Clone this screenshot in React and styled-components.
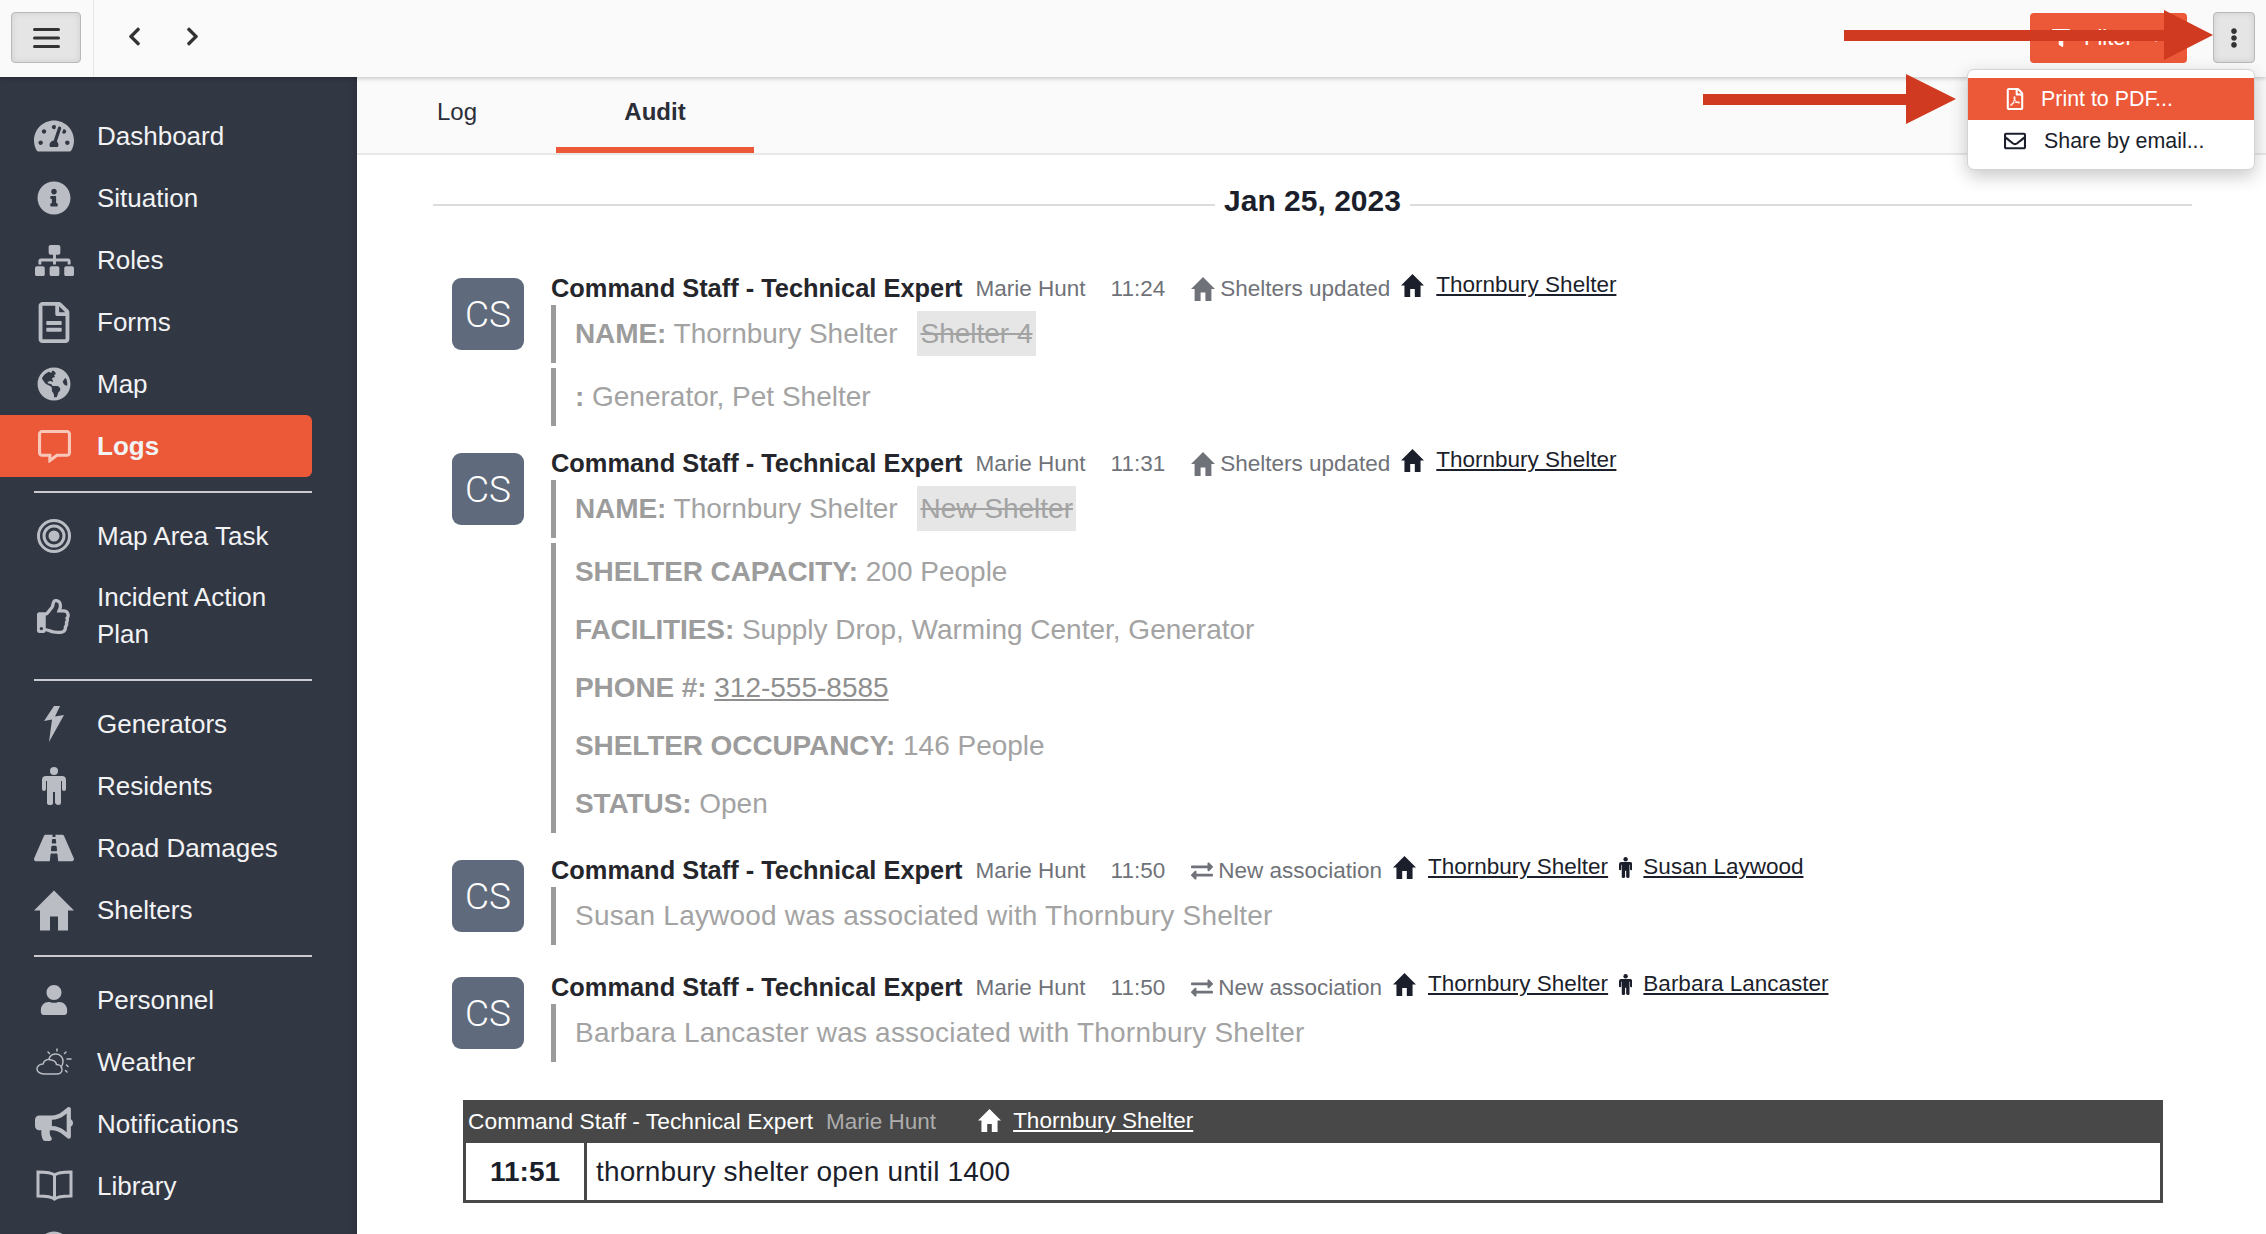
import React from 'react'
import styled, { createGlobalStyle } from 'styled-components'
import {
  FaTachometerAlt, FaInfoCircle, FaSitemap, FaRegFileAlt, FaGlobeAmericas, FaRegCommentAlt,
  FaRegThumbsUp, FaRoad, FaUser, FaBullhorn, FaQuestionCircle,
  FaExchangeAlt, FaRegFilePdf, FaRegEnvelope, FaFilter, FaCaretDown, FaChevronLeft, FaChevronRight,
  FaEllipsisV,
} from 'react-icons/fa'

const ORANGE = '#ec5939'
const ARROW = '#cf3a20'

const GlobalStyle = createGlobalStyle`
  html, body { margin: 0; padding: 0; height: 100%; overflow: hidden; background: #fff; }
  body { font-family: "Liberation Sans", Arial, sans-serif; color: #1b1e2b; }
`

const Page = styled.div`
  position: relative;
  width: 2266px;
  height: 1234px;
  overflow: hidden;
  display: flex;
  flex-direction: column;
`

const TopBar = styled.header`
  position: relative;
  z-index: 3;
  flex: none;
  height: 77px;
  box-sizing: border-box;
  padding-bottom: 2px;
  display: flex;
  align-items: center;
  background: #fafafa;
  box-shadow: 0 1px 5px rgba(0, 0, 0, 0.25);
`
const BurgerCell = styled.div`
  width: 94px;
  height: 77px;
  margin-bottom: -2px;
  box-sizing: border-box;
  padding: 0 0 2px 11px;
  display: flex;
  align-items: center;
  border-right: 1px solid #e8e8e8;
`
const GreyButton = styled.button`
  width: ${p => p.$w}px;
  height: 51px;
  padding: 0;
  display: flex;
  align-items: center;
  justify-content: center;
  background: #e5e5e5;
  border: 1px solid #b9b9b9;
  border-radius: 4px;
  color: #333;
  box-shadow: inset 0 0 6px rgba(0, 0, 0, 0.1);
`
const HistoryNav = styled.div`
  display: flex;
  gap: 37px;
  padding: 0 0 2px 30px;
  color: #333;
  font-size: 21px;
  line-height: 0;
`
const TopRight = styled.div`
  margin-left: auto;
  display: flex;
  align-items: center;
  gap: 26px;
  padding-right: 11px;
`
const FilterButton = styled.button`
  width: 157px;
  height: 50px;
  display: flex;
  align-items: center;
  justify-content: center;
  gap: 14px;
  border: 0;
  border-radius: 4px;
  background: ${ORANGE};
  color: #fff;
  font: 22px "Liberation Sans", Arial, sans-serif;
`

const Body = styled.div`
  flex: 1;
  min-height: 0;
  display: flex;
`

const Sidebar = styled.aside`
  flex: none;
  width: 357px;
  box-sizing: border-box;
  padding: 28px 0 0;
  overflow: hidden;
  background: #323744;
  box-shadow: inset -7px 0 6px -4px rgba(0, 0, 0, 0.12);
`
const NavRow = styled.div`
  width: 312px;
  min-height: ${p => (p.$tall ? 98 : 62)}px;
  box-sizing: border-box;
  display: flex;
  align-items: center;
  border-radius: 0 6px 6px 0;
  background: ${p => (p.$active ? ORANGE : 'transparent')};
  color: #f2f3f4;
  font-size: 26px;
  line-height: 37px;
  font-weight: ${p => (p.$active ? 700 : 400)};
`
const NavIcon = styled.span`
  flex: none;
  width: 97px;
  box-sizing: border-box;
  padding-left: 34px;
  display: flex;
  color: ${p => (p.$active ? '#f9c7ba' : '#babdc3')};
  font-size: 36px;
  line-height: 0;
`
const NavIconBox = styled.span`
  width: 40px;
  display: flex;
  justify-content: center;
`
const NavDivider = styled.hr`
  width: 278px;
  height: 2px;
  margin: 14px 0 12px 34px;
  border: 0;
  background: #c9cbd0;
`

const Content = styled.main`
  flex: 1;
  min-width: 0;
`
const Tabs = styled.nav`
  height: 78px;
  box-sizing: border-box;
  display: flex;
  background: #fafafa;
  border-bottom: 2px solid #e8e8e8;
`
const Tab = styled.div`
  width: 198px;
  height: 76px;
  margin-left: ${p => p.$left}px;
  box-sizing: border-box;
  display: flex;
  align-items: center;
  justify-content: center;
  font-size: 24px;
  font-weight: ${p => (p.$active ? 700 : 400)};
  color: #2b2e38;
  border-bottom: 6px solid ${p => (p.$active ? ORANGE : 'transparent')};
`
const Feed = styled.div`
  padding: 28px 74px 0 76px;
`
const DateRow = styled.div`
  display: flex;
  align-items: center;
  gap: 9px;
  height: 36px;
  margin-bottom: 53px;
  font-size: 30px;
  font-weight: 700;
  &::before, &::after {
    content: '';
    flex: 1;
    height: 2px;
    margin-top: 8px;
    background: #dcdcdc;
  }
`
const Entry = styled.article`
  display: flex;
  padding-left: 19px;
  margin-bottom: ${p => p.$after}px;
`
const Avatar = styled.div`
  flex: none;
  width: 72px;
  height: 72px;
  margin: 6px 27px 0 0;
  display: flex;
  align-items: center;
  justify-content: center;
  border-radius: 9px;
  background: #5f6b7c;
  color: #fff;
  font-family: Roboto, "Liberation Sans", sans-serif;
  font-weight: 300;
  font-size: 37px;
`
const EntryMain = styled.div`
  flex: 1;
  min-width: 0;
`
const EntryHead = styled.div`
  height: 33px;
  display: flex;
  align-items: center;
  white-space: nowrap;
`
const Role = styled.strong`
  font-size: 25.4px;
  color: #25262b;
`
const Author = styled.span`
  margin-left: 13px;
  font-size: 22.5px;
  color: #6f7278;
`
const Time = styled(Author)`
  margin-left: 25px;
`
const Action = styled.span`
  margin-left: 26px;
  display: flex;
  align-items: center;
  gap: 5px;
  font-size: 22.5px;
  color: #6f7278;
`
const Subject = styled.span`
  display: flex;
  align-items: center;
  margin-left: ${p => p.$left}px;
  margin-bottom: ${p => p.$lift}px;
  font-size: 22.5px;
  color: ${p => p.$color || '#1b1e2b'};
`
const SubjectLink = styled.a`
  margin-left: ${p => p.$gap}px;
  color: inherit;
  text-decoration: underline;
`
const Change = styled.div`
  min-height: 58px;
  box-sizing: border-box;
  margin-bottom: 5px;
  padding-left: 19px;
  border-left: 5px solid #9b9b9b;
`
const ChangeLine = styled.div`
  height: 58px;
  line-height: 58px;
  font-size: 28px;
  color: #a3a3a3;
  white-space: nowrap;
`
const Message = styled(ChangeLine)`
  letter-spacing: 0.2px;
`
const Field = styled.b`
  color: #9c9c9c;
  letter-spacing: -0.1px;
`
const Previous = styled.s`
  margin-left: 12px;
  padding: 7px 3px;
  background: #e6e6e6;
`
const Phone = styled.a`
  color: #8f8f8f;
  text-decoration: underline;
`
const Note = styled.section`
  margin: 33px 29px 0 30px;
  border: 3px solid #484848;
  border-top: 0;
`
const NoteHead = styled.div`
  height: 43px;
  margin: 0 -3px;
  padding-left: 5px;
  display: flex;
  align-items: center;
  background: #484848;
  color: #fff;
  font-size: 22.8px;
`
const NoteAuthor = styled.span`
  margin-left: 13px;
  font-size: 22.5px;
  color: #adadad;
`
const NoteBody = styled.div`
  height: 57px;
  display: flex;
  align-items: center;
`
const NoteTime = styled.div`
  width: 118px;
  height: 100%;
  display: flex;
  align-items: center;
  justify-content: center;
  border-right: 3px solid #484848;
  font-size: 28px;
  font-weight: 700;
`
const NoteText = styled.div`
  padding-left: 9px;
  font-size: 28px;
  letter-spacing: 0.15px;
  color: #1b1e2b;
`

const Menu = styled.div`
  position: absolute;
  z-index: 5;
  top: 69px;
  left: 1967px;
  width: 288px;
  height: 101px;
  box-sizing: border-box;
  padding-top: 8px;
  background: #fff;
  border: 1px solid #d4d4d4;
  border-radius: 7px;
  box-shadow: 0 6px 18px rgba(0, 0, 0, 0.22);
`
const MenuItem = styled.div`
  height: 42px;
  display: flex;
  align-items: center;
  box-sizing: border-box;
  padding-left: 36px;
  gap: ${p => p.$gap}px;
  background: ${p => (p.$active ? ORANGE : 'transparent')};
  color: ${p => (p.$active ? '#fff' : '#1b1e2b')};
  font-size: 21.4px;
`
const Arrow = styled.svg`
  position: absolute;
  z-index: 6;
  top: ${p => p.$top}px;
  left: ${p => p.$left}px;
`

function BurgerIcon() {
  return (
    <svg width="27" height="20" viewBox="0 0 27 20" fill="currentColor">
      <rect width="27" height="3" y="0" rx="1.5" />
      <rect width="27" height="3" y="8.5" rx="1.5" />
      <rect width="27" height="3" y="17" rx="1.5" />
    </svg>
  )
}

function HomeIcon({ size }) {
  return (
    <svg width={size} height={size} viewBox="0 0 40 40" fill="currentColor">
      <path d="M20 0 40 20H34V40H24V26H16V40H6V20H0Z" />
    </svg>
  )
}

function PersonIcon({ height }) {
  return (
    <svg width={(height * 24) / 38} height={height} viewBox="0 0 24 38" fill="currentColor">
      <circle cx="12" cy="4" r="4" />
      <path d="M4 9H20Q24 9 24 13V22Q24 24 22 24T20 22V14H19V36Q19 38 16.500 38T13 36V25H11V36Q11 38 8 38T5 36V14H4V22Q4 24 2 24T0 22V13Q0 9 4 9Z" />
    </svg>
  )
}

function BoltIcon() {
  return (
    <svg width="20" height="36" viewBox="0 0 20 36" fill="currentColor">
      <path d="M10 0 0 15 8 13.500 5 36 20 9 11 10.500 16 0Z" />
    </svg>
  )
}

function TargetIcon() {
  return (
    <svg width="34" height="34" viewBox="0 0 34 34" fill="none" stroke="currentColor" strokeWidth="3">
      <circle cx="17" cy="17" r="15.500" />
      <circle cx="17" cy="17" r="10" />
      <circle cx="17" cy="17" r="5.500" fill="currentColor" stroke="none" />
    </svg>
  )
}

function WeatherIcon() {
  return (
    <svg width="36" height="28" viewBox="0 0 36 28" fill="none" stroke="currentColor" strokeWidth="1.500" strokeLinecap="round">
      <path d="M8 26C3.500 26 1 23.500 1 21S3.500 16 7 16C8 12 12 10.500 15.500 12 18 12.500 20 14 20.500 16.500 24 16.500 26 19 26 21.500 26 24.500 23.500 26 21 26Z" />
      <path d="M13 11C14 7.500 17 6 20 6 24.500 6 27.500 10 27 14 26.800 16 26 18 25 19" />
      <path d="M21 1V3M12 4 13.500 5.500M30 4 28.500 5.500M31 11H35M30.500 17 32 18.500M29.500 22.500 31 24" />
    </svg>
  )
}

function BookIcon() {
  return (
    <svg width="37" height="34" viewBox="0 0 37 34" fill="none" stroke="currentColor" strokeWidth="3">
      <path d="M18.500 6C15 3 8 3 2 3v24c6 0 13 0 16.500 3 3.500-3 10.500-3 16.500-3V3c-6 0-13 0-16.500 3v25" />
    </svg>
  )
}

const navGroups = [
  [
    { icon: <FaTachometerAlt size={40} />, label: 'Dashboard' },
    { icon: <FaInfoCircle size={34} />, label: 'Situation' },
    { icon: <FaSitemap size={39} />, label: 'Roles' },
    { icon: <FaRegFileAlt size={41} />, label: 'Forms' },
    { icon: <FaGlobeAmericas size={34} />, label: 'Map' },
    { icon: <FaRegCommentAlt size={33} />, label: 'Logs', active: true },
  ],
  [
    { icon: <TargetIcon />, label: 'Map Area Task' },
    { icon: <FaRegThumbsUp size={35} />, label: 'Incident Action Plan', tall: true },
  ],
  [
    { icon: <BoltIcon />, label: 'Generators' },
    { icon: <PersonIcon height={38} />, label: 'Residents' },
    { icon: <FaRoad size={42} />, label: 'Road Damages' },
    { icon: <HomeIcon size={41} />, label: 'Shelters' },
  ],
  [
    { icon: <FaUser size={30} />, label: 'Personnel' },
    { icon: <WeatherIcon />, label: 'Weather' },
    { icon: <FaBullhorn size={38} />, label: 'Notifications' },
    { icon: <BookIcon />, label: 'Library' },
    { icon: <FaQuestionCircle size={34} />, label: '' },
  ],
]

const SHELTER = 'Thornbury Shelter'

const entries = [
  {
    time: '11:24',
    after: 16,
    action: 'Shelters updated',
    actionIcon: <HomeIcon size={24} />,
    changes: [
      [<><Field>NAME:</Field> Thornbury Shelter <Previous>Shelter 4</Previous></>],
      [<><Field>:</Field> Generator, Pet Shelter</>],
    ],
  },
  {
    time: '11:31',
    after: 16,
    action: 'Shelters updated',
    actionIcon: <HomeIcon size={24} />,
    changes: [
      [<><Field>NAME:</Field> Thornbury Shelter <Previous>New Shelter</Previous></>],
      [
        <><Field>SHELTER CAPACITY:</Field> 200 People</>,
        <><Field>FACILITIES:</Field> Supply Drop, Warming Center, Generator</>,
        <><Field>PHONE #:</Field> <Phone>312-555-8585</Phone></>,
        <><Field>SHELTER OCCUPANCY:</Field> 146 People</>,
        <><Field>STATUS:</Field> Open</>,
      ],
    ],
  },
  {
    time: '11:50',
    after: 21,
    action: 'New association',
    actionIcon: <FaExchangeAlt size={22} />,
    person: 'Susan Laywood',
    message: 'Susan Laywood was associated with Thornbury Shelter',
  },
  {
    time: '11:50',
    after: 21,
    action: 'New association',
    actionIcon: <FaExchangeAlt size={22} />,
    person: 'Barbara Lancaster',
    message: 'Barbara Lancaster was associated with Thornbury Shelter',
  },
]

const RedArrow = ({ top, left, shaft, head }) => (
  <Arrow $top={top} $left={left} width={shaft + head} height="50" viewBox={`0 0 ${shaft + head} 50`}>
    <path d={`M0 20H${shaft}V0L${shaft + head} 25 ${shaft} 50V31H0Z`} fill={ARROW} />
  </Arrow>
)

const NavItem = ({ icon, label, active, tall }) => (
  <NavRow $active={active} $tall={tall}>
    <NavIcon $active={active}><NavIconBox>{icon}</NavIconBox></NavIcon>
    <span>{label}</span>
  </NavRow>
)

const LogEntry = ({ time, after, action, actionIcon, person, changes, message }) => (
  <Entry $after={after}>
    <Avatar>CS</Avatar>
    <EntryMain>
      <EntryHead>
        <Role>Command Staff - Technical Expert</Role>
        <Author>Marie Hunt</Author>
        <Time>{time}</Time>
        <Action>{actionIcon}{action}</Action>
        <Subject $left={person ? 11 : 11} $lift={7}>
          <HomeIcon size={23} />
          <SubjectLink $gap={12}>{SHELTER}</SubjectLink>
        </Subject>
        {person && (
          <Subject $left={11} $lift={7}>
            <PersonIcon height={21} />
            <SubjectLink $gap={11}>{person}</SubjectLink>
          </Subject>
        )}
      </EntryHead>
      {message && <Change><Message>{message}</Message></Change>}
      {changes && changes.map((lines, i) => (
        <Change key={i}>
          {lines.map((line, j) => <ChangeLine key={j}>{line}</ChangeLine>)}
        </Change>
      ))}
    </EntryMain>
  </Entry>
)

export default function App() {
  return (
    <Page>
      <GlobalStyle />
      <TopBar>
        <BurgerCell>
          <GreyButton $w={70}><BurgerIcon /></GreyButton>
        </BurgerCell>
        <HistoryNav>
          <FaChevronLeft />
          <FaChevronRight />
        </HistoryNav>
        <TopRight>
          <FilterButton><FaFilter size={18} />Filter<FaCaretDown size={18} /></FilterButton>
          <GreyButton $w={42}><FaEllipsisV size={20} /></GreyButton>
        </TopRight>
      </TopBar>
      <Body>
        <Sidebar>
          {navGroups.map((group, i) => (
            <React.Fragment key={i}>
              {i > 0 && <NavDivider />}
              {group.map((item, j) => <NavItem key={j} {...item} />)}
            </React.Fragment>
          ))}
        </Sidebar>
        <Content>
          <Tabs>
            <Tab $left={1}>Log</Tab>
            <Tab $active>Audit</Tab>
          </Tabs>
          <Feed>
            <DateRow>Jan 25, 2023</DateRow>
            {entries.map((entry, i) => <LogEntry key={i} {...entry} />)}
            <Note>
              <NoteHead>
                Command Staff - Technical Expert
                <NoteAuthor>Marie Hunt</NoteAuthor>
                <Subject $left={42} $lift={2} $color="#fff">
                  <HomeIcon size={23} />
                  <SubjectLink $gap={12}>{SHELTER}</SubjectLink>
                </Subject>
              </NoteHead>
              <NoteBody>
                <NoteTime>11:51</NoteTime>
                <NoteText>thornbury shelter open until 1400</NoteText>
              </NoteBody>
            </Note>
          </Feed>
        </Content>
      </Body>
      <Menu>
        <MenuItem $active $gap={15}><FaRegFilePdf size={22} />Print to PDF...</MenuItem>
        <MenuItem $gap={18}><FaRegEnvelope size={22} />Share by email...</MenuItem>
      </Menu>
      <RedArrow top={10} left={1844} shaft={320} head={49} />
      <RedArrow top={74} left={1703} shaft={203} head={50} />
    </Page>
  )
}
